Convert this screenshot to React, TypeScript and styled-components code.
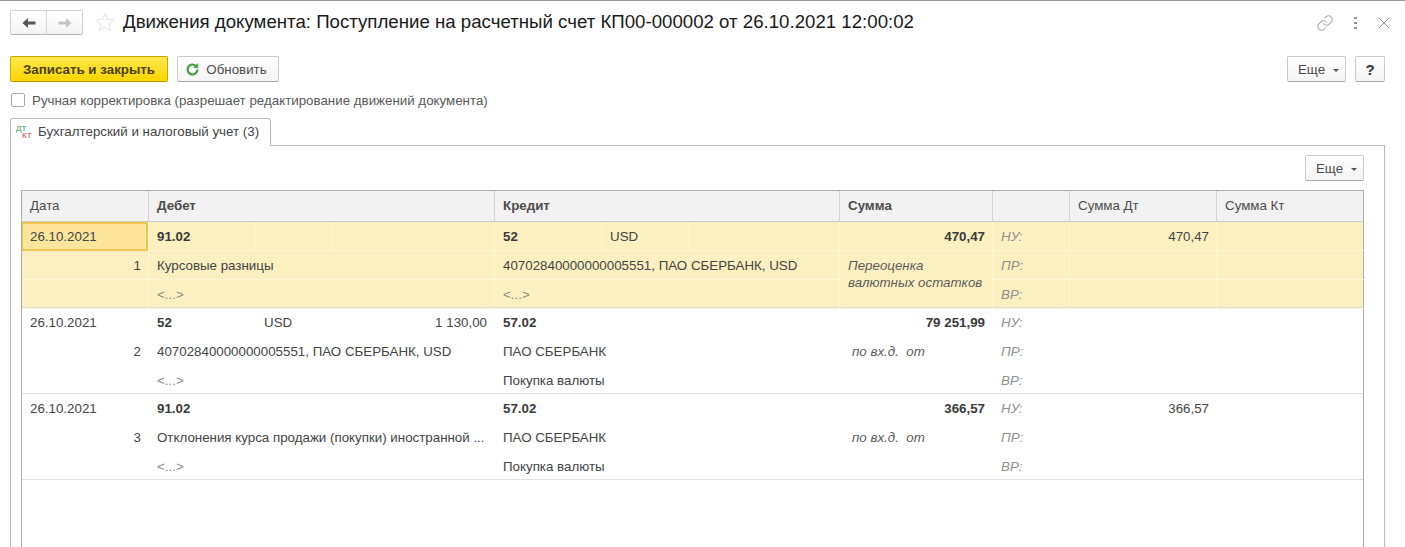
import styled, { createGlobalStyle } from "styled-components";

const GlobalStyle = createGlobalStyle`
  html, body {
    margin: 0;
    padding: 0;
    background: #fff;
    overflow: hidden;
  }
  body {
    font-family: "Liberation Sans", Arial, sans-serif;
    font-size: 13.33px;
    color: #333;
  }
`;

const COLUMNS = "126px 346px 345px 153px 77px 147px 148px";

interface Entry {
  date: string;
  num: number;
  debit: string;
  debitSub?: string;
  debitQty?: string;
  debitName: string;
  debitExtra: string;
  credit: string;
  creditSub?: string;
  creditName: string;
  creditExtra: string;
  sum: string;
  note: string;
  noteSmall?: boolean;
  sumDt?: string;
  selected?: boolean;
}

const entries: Entry[] = [
  {
    date: "26.10.2021",
    num: 1,
    debit: "91.02",
    debitName: "Курсовые разницы",
    debitExtra: "<...>",
    credit: "52",
    creditSub: "USD",
    creditName: "40702840000000005551, ПАО СБЕРБАНК, USD",
    creditExtra: "<...>",
    sum: "470,47",
    note: "Переоценка валютных остатков",
    sumDt: "470,47",
    selected: true,
  },
  {
    date: "26.10.2021",
    num: 2,
    debit: "52",
    debitSub: "USD",
    debitQty: "1 130,00",
    debitName: "40702840000000005551, ПАО СБЕРБАНК, USD",
    debitExtra: "<...>",
    credit: "57.02",
    creditName: "ПАО СБЕРБАНК",
    creditExtra: "Покупка валюты",
    sum: "79 251,99",
    note: "по вх.д.  от",
    noteSmall: true,
  },
  {
    date: "26.10.2021",
    num: 3,
    debit: "91.02",
    debitName: "Отклонения курса продажи (покупки) иностранной ...",
    debitExtra: "<...>",
    credit: "57.02",
    creditName: "ПАО СБЕРБАНК",
    creditExtra: "Покупка валюты",
    sum: "366,57",
    note: "по вх.д.  от",
    noteSmall: true,
    sumDt: "366,57",
  },
];

interface AccountLineProps {
  entry: Entry;
  code: string;
  sub?: string;
  qty?: string;
  midWidth: number;
}

const AccountLine = ({ entry, code, sub, qty, midWidth }: AccountLineProps) => (
  <SplitCell $selected={entry.selected} $mid={midWidth}>
    <SplitPart $selected={entry.selected}>
      <b>{code}</b>
    </SplitPart>
    <SplitPart $selected={entry.selected}>{sub}</SplitPart>
    <SplitPart $selected={entry.selected} $end>
      {qty}
    </SplitPart>
  </SplitCell>
);

const Group = ({ entry }: { entry: Entry }) => {
  const s = entry.selected;
  const muted = (t: string) => (t === "<...>" ? <Dim>{t}</Dim> : t);
  return (
    <GroupGrid $selected={s}>
      {/* first line */}
      <DateCell $selected={s}>{entry.date}</DateCell>
      <AccountLine entry={entry} code={entry.debit} sub={entry.debitSub} qty={entry.debitQty} midWidth={77} />
      <AccountLine entry={entry} code={entry.credit} sub={entry.creditSub} midWidth={87} />
      <Cell $selected={s} $end>
        <b>{entry.sum}</b>
      </Cell>
      <Cell $selected={s} $label>НУ:</Cell>
      <Cell $selected={s} $end>{entry.sumDt}</Cell>
      <Cell $selected={s} />

      {/* second line */}
      <NumberCell $selected={s} $end>{entry.num}</NumberCell>
      <Cell $selected={s}>{entry.debitName}</Cell>
      <Cell $selected={s}>{entry.creditName}</Cell>
      <NoteCell $selected={s} $small={entry.noteSmall}>{entry.note}</NoteCell>
      <Cell $selected={s} $label>ПР:</Cell>
      <Cell $selected={s} />
      <Cell $selected={s} />

      {/* third line */}
      <NumberCell $selected={s} />
      <Cell $selected={s}>{muted(entry.debitExtra)}</Cell>
      <Cell $selected={s}>{muted(entry.creditExtra)}</Cell>
      <Cell $selected={s} $label>ВР:</Cell>
      <Cell $selected={s} />
      <Cell $selected={s} />
    </GroupGrid>
  );
};

const MoreButton = () => (
  <MoreBtn $w={59}>
    Еще
    <Caret />
  </MoreBtn>
);

export default function App() {
  return (
    <Page>
      <GlobalStyle />
      <TitleBar>
        <NavGroup>
          <NavButton>
            <svg width="14" height="12" viewBox="0 0 14 12">
              <path d="M0.5 6 L6 1 V4.4 H13.5 V7.6 H6 V11 Z" fill="#555" />
            </svg>
          </NavButton>
          <NavButton>
            <svg width="14" height="12" viewBox="0 0 14 12">
              <path d="M13.5 6 L8 1 V4.4 H0.5 V7.6 H8 V11 Z" fill="#c4c4c4" />
            </svg>
          </NavButton>
        </NavGroup>
        <StarIcon width="20" height="20" viewBox="0 0 20 20">
          <path
            d="M10 1.5 L12.5 7.4 L18.8 7.9 L14 12 L15.5 18.3 L10 15 L4.5 18.3 L6 12 L1.2 7.9 L7.5 7.4 Z"
            fill="none"
            stroke="#e2e2e2"
            strokeWidth="1"
          />
        </StarIcon>
        <Title>Движения документа: Поступление на расчетный счет КП00-000002 от 26.10.2021 12:00:02</Title>
        <WindowTools>
          <svg width="18" height="18" viewBox="0 0 24 24" fill="none" stroke="#a6a6a6" strokeWidth="1.4" strokeLinecap="round">
            <path d="M10 13a5 5 0 0 0 7.5.5l3-3a5 5 0 0 0-7-7l-1.7 1.7" />
            <path d="M14 11a5 5 0 0 0-7.5-.5l-3 3a5 5 0 0 0 7 7l1.7-1.7" />
          </svg>
          <Dots>
            <i />
            <i />
            <i />
          </Dots>
          <svg width="14" height="14" viewBox="0 0 14 14" stroke="#949494" strokeWidth="1">
            <path d="M2 2 L12 12 M12 2 L2 12" />
          </svg>
        </WindowTools>
      </TitleBar>

      <CommandBar>
        <PrimaryButton>Записать и закрыть</PrimaryButton>
        <RefreshBtn $w={102}>
          <svg width="15" height="15" viewBox="0 0 24 24" fill="none" stroke="#3f9a3f" strokeWidth="3.4">
            <path d="M20 12a8 8 0 1 1-2.6-5.9" />
            <path d="M20.5 2.5v6.5h-6.5z" fill="#3f9a3f" strokeWidth="1" />
          </svg>
          Обновить
        </RefreshBtn>
        <Spacer />
        <MoreButton />
        <GreyButton $w={30}>
          <Question>?</Question>
        </GreyButton>
      </CommandBar>

      <CheckRow>
        <CheckBox />
        Ручная корректировка (разрешает редактирование движений документа)
      </CheckRow>

      <TabStrip>
        <Tab>
          <DtKt>
            <span>ДТ</span>
            <span>КТ</span>
          </DtKt>
          Бухгалтерский и налоговый учет (3)
        </Tab>
      </TabStrip>

      <Panel>
        <PanelBar>
          <MoreButton />
        </PanelBar>
        <Table>
          <HeadRow>
            <HeadCell>Дата</HeadCell>
            <HeadCell $bold>Дебет</HeadCell>
            <HeadCell $bold>Кредит</HeadCell>
            <HeadCell $bold>Сумма</HeadCell>
            <HeadCell />
            <HeadCell>Сумма Дт</HeadCell>
            <HeadCell>Сумма Кт</HeadCell>
          </HeadRow>
          {entries.map((entry) => (
            <Group key={entry.num} entry={entry} />
          ))}
        </Table>
      </Panel>
    </Page>
  );
}

// Styled Components
const Page = styled.div`
  height: 547px;
  box-sizing: border-box;
  border-top: 1px solid #9a9a9a;
  padding: 0 20px 0 10px;
  display: flex;
  flex-direction: column;
  overflow: hidden;
`;

const TitleBar = styled.header`
  height: 42px;
  padding-top: 9px;
  box-sizing: border-box;
  display: flex;
  align-items: flex-start;
  flex-shrink: 0;
`;

const NavGroup = styled.div`
  width: 73px;
  height: 25px;
  box-sizing: border-box;
  border: 1px solid #cfcfcf;
  border-bottom-color: #b5b5b5;
  border-radius: 2px;
  background: linear-gradient(#fff, #f3f3f3);
  display: flex;
`;

const NavButton = styled.span`
  flex: 1;
  display: flex;
  align-items: center;
  justify-content: center;

  & + & {
    border-left: 1px solid #d4d4d4;
  }
`;

const StarIcon = styled.svg`
  margin: 2px 0 0 12px;
  flex-shrink: 0;
`;

const Title = styled.h1`
  margin: 0 0 0 8px;
  font-size: 18.66px;
  line-height: 24px;
  font-weight: 400;
  color: #1a1a1a;
  white-space: nowrap;
`;

const WindowTools = styled.div`
  margin-left: auto;
  margin-right: -6px;
  display: flex;
  align-items: center;
  gap: 20px;
  height: 26px;
`;

const Dots = styled.span`
  width: 3px;
  display: flex;
  flex-direction: column;
  gap: 3px;

  i {
    display: block;
    width: 3px;
    height: 2px;
    background: #8f8f8f;
  }
`;

const CommandBar = styled.div`
  margin-top: 13px;
  height: 26px;
  display: flex;
  gap: 9px;
  flex-shrink: 0;
`;

const Spacer = styled.div`
  flex: 1;
`;

const PrimaryButton = styled.button`
  width: 158px;
  height: 26px;
  padding: 0;
  box-sizing: border-box;
  border: 1px solid #c9a800;
  border-bottom-color: #b59700;
  border-radius: 2px;
  background: linear-gradient(#ffe84d, #fcd500);
  font: 700 13.33px "Liberation Sans", Arial, sans-serif;
  color: #4a4000;
`;

const GreyButton = styled.button<{ $w: number }>`
  width: ${({ $w }) => $w}px;
  height: 26px;
  padding: 0;
  box-sizing: border-box;
  display: flex;
  align-items: center;
  justify-content: center;
  gap: 6px;
  border: 1px solid #cbcbcb;
  border-bottom-color: #a8a8a8;
  border-radius: 2px;
  background: linear-gradient(#fff, #f4f4f4);
  font: 400 13.33px "Liberation Sans", Arial, sans-serif;
  color: #4d4d4d;
  flex-shrink: 0;
`;

const MoreBtn = styled(GreyButton)`
  padding-left: 4px;
  gap: 8px;
`;

const RefreshBtn = styled(GreyButton)`
  padding-right: 4px;
`;

const Caret = styled.span`
  width: 0;
  height: 0;
  margin-top: 2px;
  border: 3px solid transparent;
  border-top: 3px solid #555;
  border-bottom: 0;
`;

const Question = styled.span`
  font-size: 15px;
  font-weight: 700;
  color: #333;
`;

const CheckRow = styled.label`
  margin-top: 9px;
  height: 18px;
  padding-left: 1px;
  display: flex;
  align-items: center;
  gap: 7px;
  font-size: 13.33px;
  color: #595959;
  flex-shrink: 0;
`;

const CheckBox = styled.span`
  width: 14px;
  height: 14px;
  box-sizing: border-box;
  border: 1px solid #a8a8a8;
  border-radius: 2px;
  background: #fff;
`;

const TabStrip = styled.div`
  margin-top: 9px;
  height: 28px;
  display: flex;
  flex-shrink: 0;
  position: relative;
  z-index: 1;
`;

const Tab = styled.div`
  width: 261px;
  height: 28px;
  box-sizing: border-box;
  padding: 0 0 2px 5px;
  display: flex;
  align-items: center;
  gap: 4px;
  background: #fff;
  border: 1px solid #b8b8b8;
  border-bottom: 0;
  border-radius: 3px 3px 0 0;
  font-size: 13.33px;
  color: #444;
`;

const DtKt = styled.span`
  width: 18px;
  display: flex;
  flex-direction: column;
  font-size: 8px;
  line-height: 7px;

  span:first-child {
    color: #3f8f5a;
  }
  span:last-child {
    color: #c04040;
    padding-left: 6px;
  }
`;

const Panel = styled.section`
  margin-top: -1px;
  flex: 1;
  min-height: 0;
  box-sizing: border-box;
  border: 1px solid #b8b8b8;
  border-bottom: 0;
  padding: 9px 20px 0 10px;
  display: flex;
  flex-direction: column;
`;

const PanelBar = styled.div`
  height: 26px;
  display: flex;
  justify-content: flex-end;
  flex-shrink: 0;
  margin-bottom: 9px;
`;

const Table = styled.div`
  flex: 1;
  min-height: 0;
  box-sizing: border-box;
  width: 1343px;
  border: 1px solid #ababab;
  border-bottom: 0;
`;

const HeadRow = styled.div`
  display: grid;
  grid-template-columns: ${COLUMNS};
  height: 31px;
  background: #f2f2f2;
  border-bottom: 1px solid #c9c9c9;
  box-sizing: border-box;
`;

const HeadCell = styled.div<{ $bold?: boolean }>`
  padding: 0 8px 2px;
  display: flex;
  align-items: center;
  font-size: 13.33px;
  font-weight: ${({ $bold }) => ($bold ? 700 : 400)};
  color: #4d4d4d;
  border-left: 1px solid #d4d4d4;

  &:first-child {
    border-left: 0;
  }
`;

const GroupGrid = styled.div<{ $selected?: boolean }>`
  display: grid;
  grid-template-columns: ${COLUMNS};
  grid-template-rows: 29px 29px 29px;
  border-bottom: 1px solid #dedede;
  height: 85px;
  background: ${({ $selected }) => ($selected ? "#fdf0c0" : "#fff")};
`;

const Cell = styled.div<{ $selected?: boolean; $end?: boolean; $label?: boolean }>`
  min-width: 0;
  box-sizing: border-box;
  padding: 0 ${({ $end }) => ($end ? "7px" : "8px")} 0 8px;
  display: flex;
  align-items: center;
  justify-content: ${({ $end }) => ($end ? "flex-end" : "flex-start")};
  font-size: 13.33px;
  white-space: nowrap;
  color: ${({ $label }) => ($label ? "#8f8f8f" : "#444")};
  font-style: ${({ $label }) => ($label ? "italic" : "normal")};
  border-left: 1px solid ${({ $selected }) => ($selected ? "#fef5d4" : "transparent")};
  border-bottom: 1px solid ${({ $selected }) => ($selected ? "#fef5d4" : "transparent")};

  b {
    color: #3a3a3a;
  }
`;

const NumberCell = styled(Cell)`
  border-left: 0;
`;

const DateCell = styled(Cell)`
  border-left: 0;
  ${({ $selected }) =>
    $selected &&
    `background: #fde59c;
     border: 1px solid #f1c94a;
     border-width: 2px 2px 2px 1px;
     padding-left: 7px;`}
`;

const SplitCell = styled.div<{ $selected?: boolean; $mid: number }>`
  display: grid;
  grid-template-columns: 107px ${({ $mid }) => $mid}px 1fr;
  min-width: 0;
  border-bottom: 1px solid ${({ $selected }) => ($selected ? "#fef5d4" : "transparent")};
`;

const SplitPart = styled.div<{ $selected?: boolean; $end?: boolean }>`
  box-sizing: border-box;
  padding: 0 ${({ $end }) => ($end ? "7px" : "8px")} 0 8px;
  display: flex;
  align-items: center;
  justify-content: ${({ $end }) => ($end ? "flex-end" : "flex-start")};
  font-size: 13.33px;
  white-space: nowrap;
  color: #444;
  border-left: 1px solid ${({ $selected }) => ($selected ? "#fef5d4" : "transparent")};

  b {
    color: #3a3a3a;
  }
`;

const NoteCell = styled(Cell)<{ $small?: boolean }>`
  grid-row: span 2;
  white-space: ${({ $small }) => ($small ? "pre" : "normal")};
  font-style: italic;
  line-height: 17px;
  color: #5c5c5c;
  align-items: flex-start;
  padding-top: 6px;
  padding-left: ${({ $small }) => ($small ? "12px" : "8px")};
`;

const Dim = styled.span`
  color: #8c8c8c;
`;
